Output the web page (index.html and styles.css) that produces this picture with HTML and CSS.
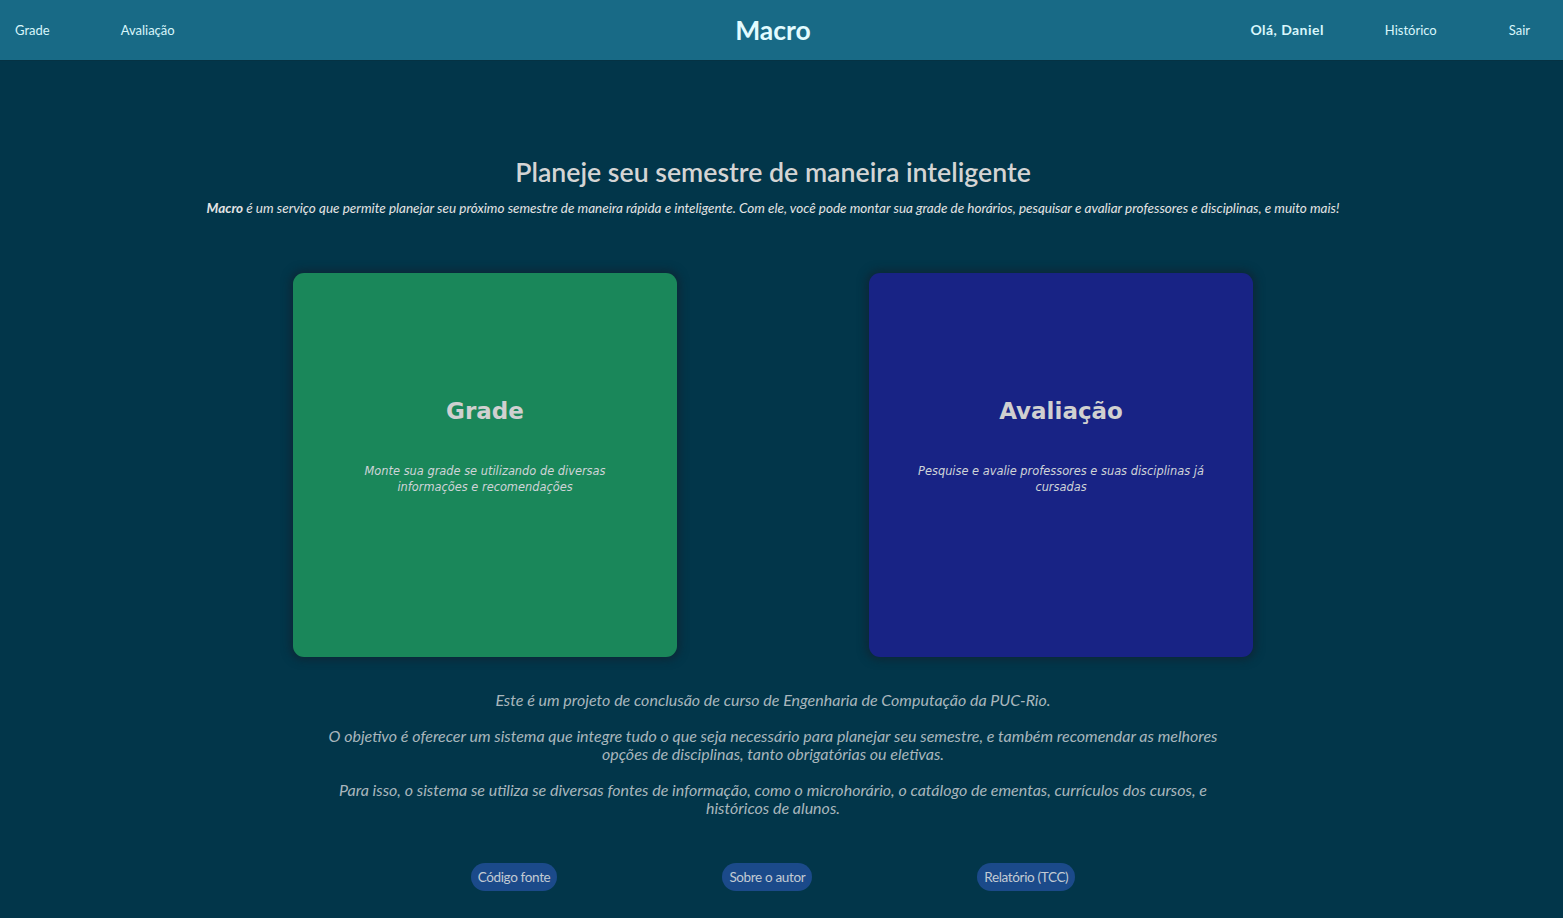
FILE: index.html
```html
<!DOCTYPE html>
<html lang="pt-BR">
<head>
<meta charset="utf-8">
<title>Macro</title>
<link rel="stylesheet" href="styles.css">
</head>
<body>
<div class="page">
  <header class="navbar">
    <nav class="nav-left">
      <a class="nav-link" href="#">Grade</a>
      <a class="nav-link nav-gap-left" href="#">Avaliação</a>
    </nav>
    <div class="brand">Macro</div>
    <nav class="nav-right">
      <span class="nav-link nav-user">Olá, Daniel</span>
      <a class="nav-link nav-gap-hist" href="#">Histórico</a>
      <a class="nav-link nav-gap-sair" href="#">Sair</a>
    </nav>
  </header>

  <main class="main">
    <h1 class="title">Planeje seu semestre de maneira inteligente</h1>
    <p class="subtitle"><b>Macro</b> é um serviço que permite planejar seu próximo semestre de maneira rápida e inteligente. Com ele, você pode montar sua grade de horários, pesquisar e avaliar professores e disciplinas, e muito mais!</p>

    <div class="cards">
      <a class="card card-green" href="#">
        <h2 class="card-title">Grade</h2>
        <p class="card-desc">Monte sua grade se utilizando de diversas informações e recomendações</p>
      </a>
      <a class="card card-blue" href="#">
        <h2 class="card-title">Avaliação</h2>
        <p class="card-desc">Pesquise e avalie professores e suas disciplinas já cursadas</p>
      </a>
    </div>

    <div class="about">
      <p>Este é um projeto de conclusão de curso de Engenharia de Computação da PUC-Rio.</p>
      <p>O objetivo é oferecer um sistema que integre tudo o que seja necessário para planejar seu semestre, e também recomendar as melhores opções de disciplinas, tanto obrigatórias ou eletivas.</p>
      <p>Para isso, o sistema se utiliza se diversas fontes de informação, como o microhorário, o catálogo de ementas, currículos dos cursos, e históricos de alunos.</p>
    </div>

    <div class="links">
      <a class="pill" href="#">Código fonte</a>
      <a class="pill" href="#">Sobre o autor</a>
      <a class="pill" href="#">Relatório (TCC)</a>
    </div>
  </main>
</div>
</body>
</html>
```

FILE: styles.css
```css
html, body {
  margin: 0;
  padding: 0;
  background: #02364a;
  height: 100%;
}
body {
  font-family: Lato, "Open Sans", sans-serif;
  overflow: hidden;
}
a { text-decoration: none; }

.page {
  min-height: 918px;
  background: #02364a;
}

.navbar {
  height: 60px;
  background: #186a86;
  border-bottom: 1px solid #053243;
  display: grid;
  grid-template-columns: 1fr auto 1fr;
  align-items: center;
  padding-right: 17px;
}
.nav-left, .nav-right {
  display: flex;
  align-items: center;
}
.nav-left { padding-left: 15px; }
.nav-right { justify-content: flex-end; padding-right: 16px; }
.nav-gap-left { margin-left: 71px; }
.nav-gap-hist { margin-left: 61px; }
.nav-gap-sair { margin-left: 72px; }
.nav-link {
  color: #d8f6fb;
  font-size: 13px;
  line-height: 20px;
}
.nav-user {
  font-weight: 700;
  font-size: 14px;
  letter-spacing: 0.45px;
}
.brand {
  color: #e2fbff;
  font-size: 26.5px;
  font-weight: 700;
  line-height: 32px;
  padding-bottom: 1px;
}

.main {
  display: flex;
  flex-direction: column;
  align-items: center;
  padding-top: 94px;
  padding-right: 17px;
}
.title {
  margin: 0;
  color: #d4d4d4;
  font-size: 26.7px;
  font-weight: 600;
  line-height: 34px;
}
.subtitle {
  margin: 11px 0 0;
  color: #e4e4e4;
  font-size: 13.5px;
  font-style: italic;
  line-height: 16px;
}
.subtitle b { font-weight: 700; }

.cards {
  display: flex;
  gap: 192px;
  margin-top: 57px;
}
.card {
  width: 384px;
  height: 384px;
  border-radius: 11px;
  box-shadow: 0 0 8px 3px rgba(20, 30, 40, 0.55);
  display: flex;
  flex-direction: column;
  align-items: center;
  box-sizing: border-box;
  padding: 123px 40px 0;
  font-family: Verdana, "DejaVu Sans", sans-serif;
  text-align: center;
}
.card-green { background: #1a875a; }
.card-blue { background: #182385; }
.card-title {
  margin: 0;
  color: #d0d0d0;
  font-size: 23px;
  font-weight: 700;
  line-height: 30px;
}
.card-desc {
  margin: 37px 0 0;
  color: #cfd4d8;
  font-size: 11.4px;
  font-style: italic;
  line-height: 16px;
  max-width: 300px;
}

.about {
  margin-top: 34px;
  width: 910px;
  text-align: center;
  color: #a9b6bd;
  font-size: 16px;
  font-style: italic;
  line-height: 18px;
}
.about p { margin: 0 0 18px; }

.links {
  display: flex;
  gap: 165px;
  margin-top: 28px;
}
.pill {
  background: #1b4a8a;
  color: #c2cbd4;
  font-size: 13.5px;
  line-height: 28px;
  height: 28px;
  padding: 0 7px;
  border-radius: 14px;
  letter-spacing: -0.35px;
}
```
